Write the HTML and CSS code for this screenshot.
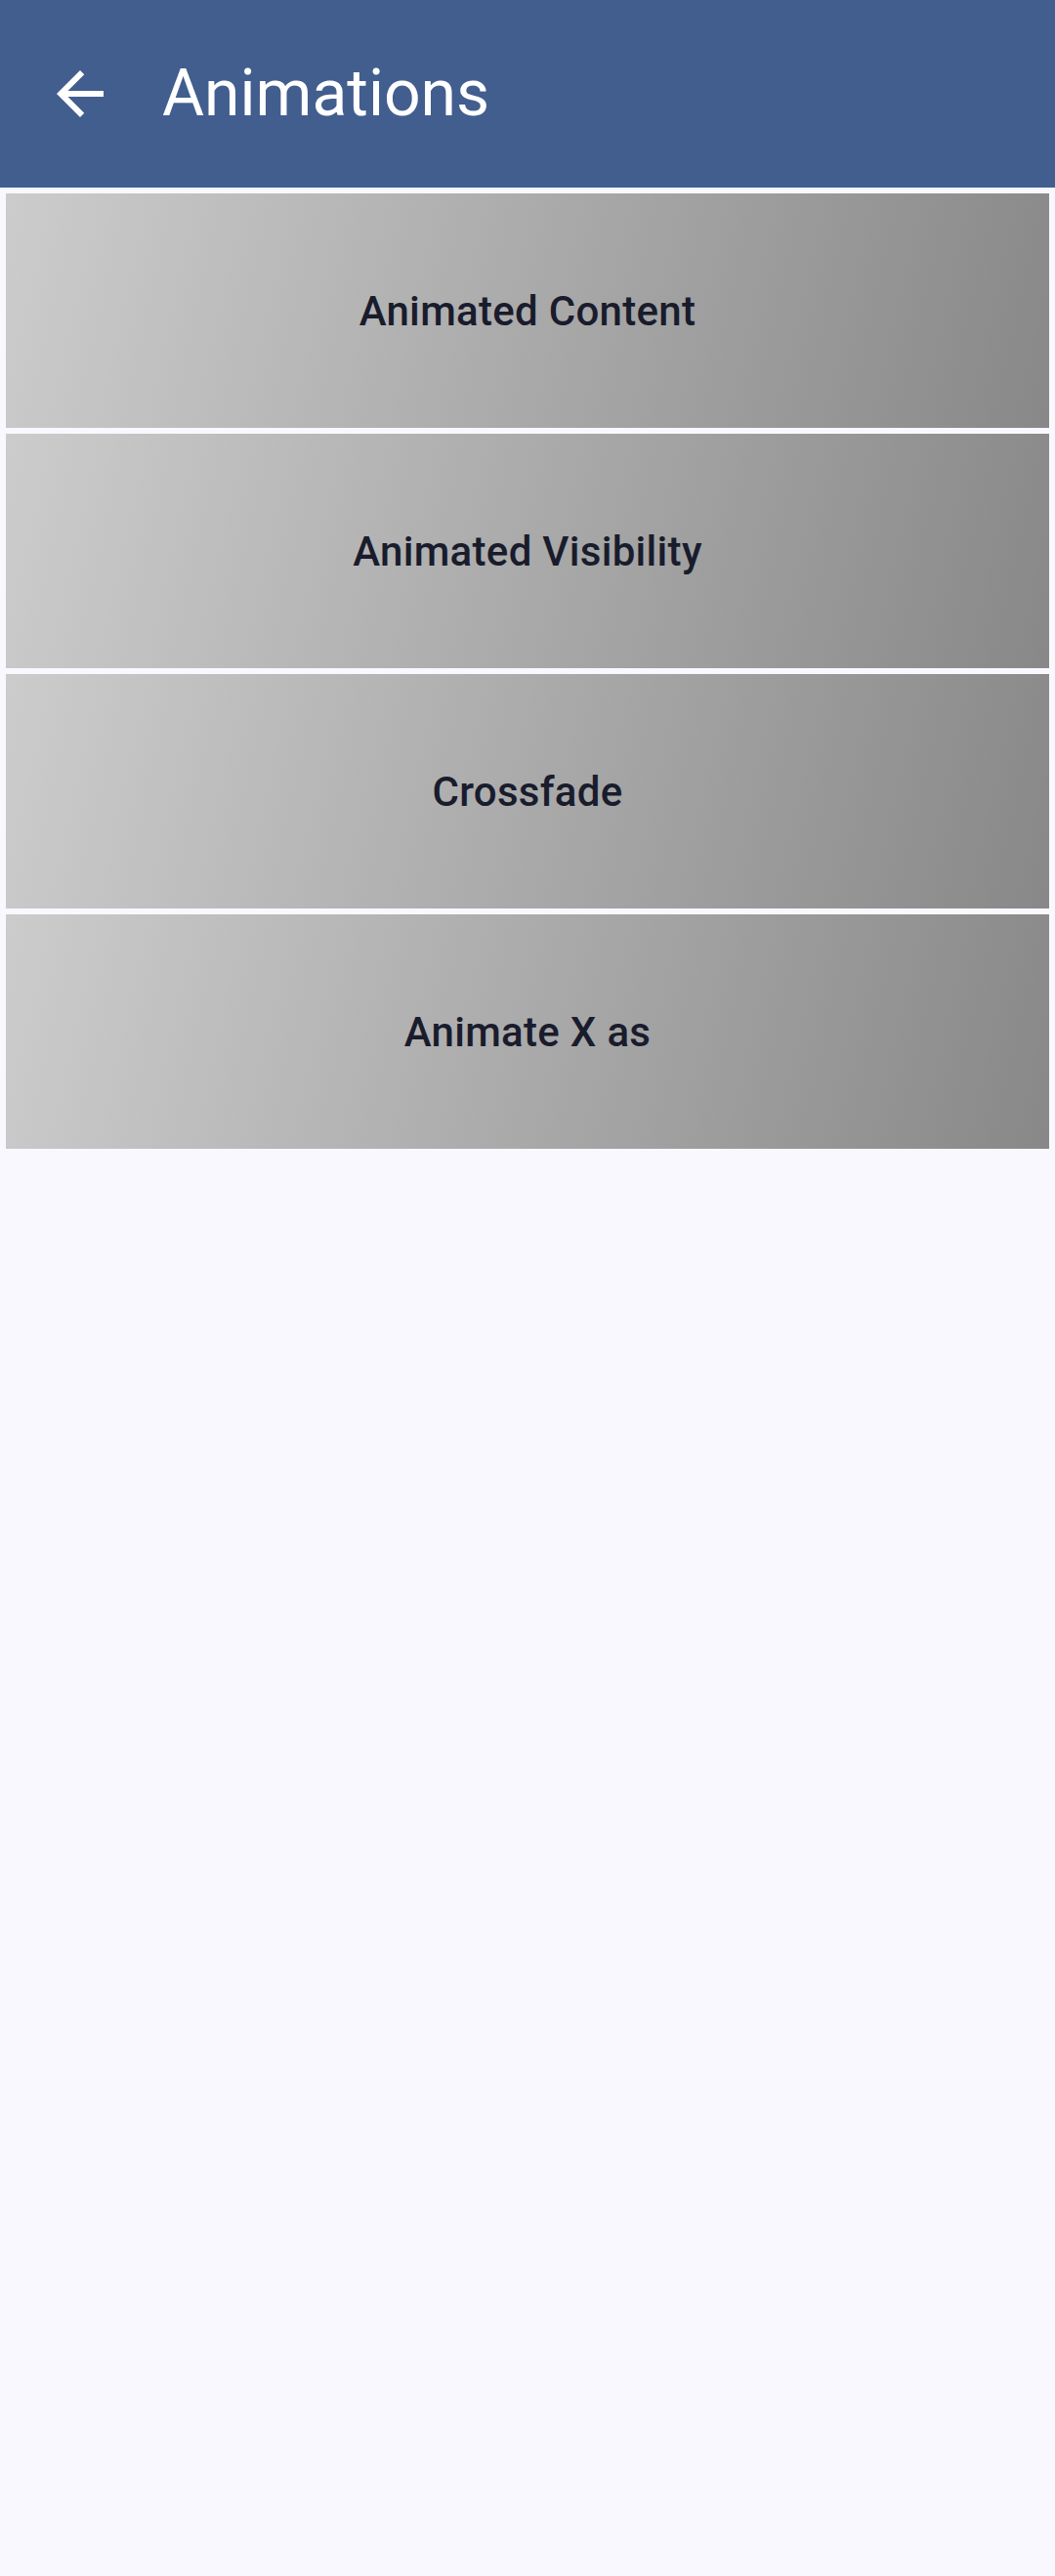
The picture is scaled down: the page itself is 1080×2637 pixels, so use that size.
FILE: index.html
```html
<!DOCTYPE html>
<html>
<head>
<meta charset="utf-8">
<link rel="stylesheet" href="styles.css">
</head>
<body>
<header class="appbar">
  <div class="back">
    <svg viewBox="0 0 24 24" width="72" height="72"><path fill="#ffffff" d="M20 11H7.83l5.59-5.59L12 4l-8 8 8 8 1.41-1.41L7.83 13H20v-2z"/></svg>
  </div>
  <h1 class="title">Animations</h1>
</header>
<main class="list">
  <div class="card">Animated Content</div>
  <div class="card">Animated Visibility</div>
  <div class="card">Crossfade</div>
  <div class="card">Animate X as</div>
</main>
</body>
</html>
```
FILE: styles.css
```css
html, body {
  margin: 0;
  padding: 0;
  background: #f9f8fe;
  font-family: Roboto, "Noto Sans", sans-serif;
}
body {
  width: 1080px;
  min-height: 2637px;
}
.appbar {
  height: 192px;
  background: #425e8f;
  display: flex;
  align-items: center;
}
.back {
  width: 72px;
  height: 72px;
  margin-left: 46px;
  display: flex;
}
.title {
  margin: 0 0 0 48px;
  color: #ffffff;
  font-size: 66px;
  font-weight: 400;
  line-height: 1;
}
.list {
  display: flex;
  flex-direction: column;
  gap: 6px;
  padding: 6px;
}
.card {
  height: 240px;
  display: flex;
  align-items: center;
  justify-content: center;
  background: linear-gradient(102.66deg, #cccccc, #888888);
  color: #191c2c;
  font-size: 42px;
  font-weight: 500;
  letter-spacing: 0.3px;
}
```
